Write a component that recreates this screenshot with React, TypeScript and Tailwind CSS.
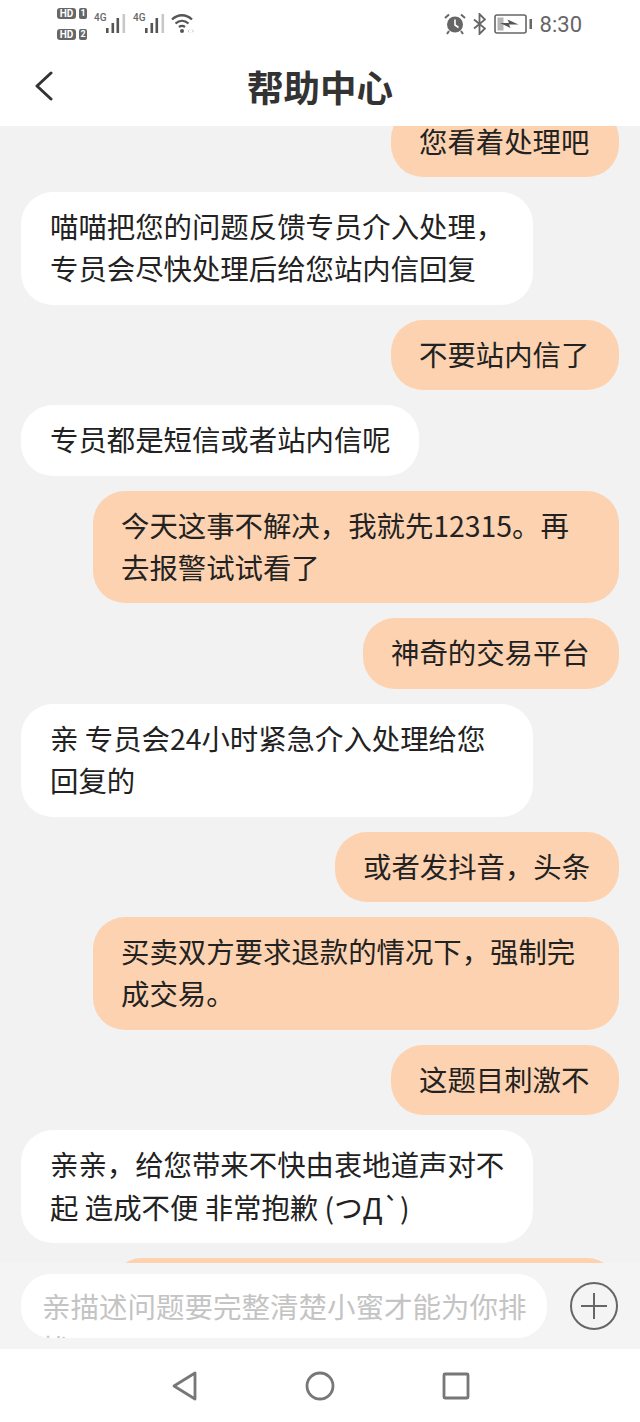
import React from 'react';

const messages: { id: number; mine: boolean; text: React.ReactNode; width: string }[] = [
  { id: 1, mine: true, width: 'w-[228px]', text: '您看着处理吧' },
  { id: 2, mine: false, width: 'w-[512px]', text: <>喵喵把您的问题反馈专员介入处理，<br />专员会尽快处理后给您站内信回复</> },
  { id: 3, mine: true, width: 'w-[228px]', text: '不要站内信了' },
  { id: 4, mine: false, width: 'w-[398px]', text: '专员都是短信或者站内信呢' },
  { id: 5, mine: true, width: 'w-[526px]', text: <>今天这事不解决，我就先12315。再<br />去报警试试看了</> },
  { id: 6, mine: true, width: 'w-[256px]', text: '神奇的交易平台' },
  { id: 7, mine: false, width: 'w-[512px]', text: <>亲 专员会24小时紧急介入处理给您<br />回复的</> },
  { id: 8, mine: true, width: 'w-[284px]', text: '或者发抖音，头条' },
  { id: 9, mine: true, width: 'w-[526px]', text: <>买卖双方要求退款的情况下，强制完<br />成交易。</> },
  { id: 10, mine: true, width: 'w-[228px]', text: '这题目刺激不' },
  { id: 11, mine: false, width: 'w-[512px]', text: <>亲亲，给您带来不快由衷地道声对不<br />起 造成不便 非常抱歉 (つД`)</> },
  // only the top edge of this one shows above the input bar
  { id: 12, mine: true, width: 'w-[509px]', text: <><br /><br /></> },
];

const Signal = () => (
  <div className="flex items-start w-[39px]">
    <span className="text-[10px] leading-[10px] font-medium text-[#666666] mt-[13px] w-[12px] scale-y-110">4G</span>
    <svg width="20" height="21" viewBox="0 0 20 21" className="mt-[13px]">
      <rect x="0" y="15" width="2.6" height="5" fill="#555555" />
      <rect x="5.5" y="10" width="2.6" height="10" fill="#555555" />
      <rect x="10.5" y="5" width="2.6" height="15" fill="#555555" />
      <rect x="16.5" y="1" width="2.6" height="19" fill="#c8c8c8" />
    </svg>
  </div>
);

const HdBadge = ({ n }: { n: number }) => (
  <div className="flex items-center gap-[3px]">
    <span className="w-[19px] h-[11px] rounded-[3px] bg-[#666666] text-white text-[10px] leading-[11px] font-bold text-center">HD</span>
    <span className="w-[8px] h-[11px] rounded-[2px] bg-[#666666] text-white text-[9px] leading-[11px] font-bold text-center">{n}</span>
  </div>
);

const StatusBar = () => (
  <div className="h-[50px] pl-[57px] pr-[58px] flex items-start justify-between font-['Roboto',sans-serif]">
    <div className="flex items-start">
      <div className="flex flex-col gap-[10px] pt-[8px] w-[37px]">
        <HdBadge n={1} />
        <HdBadge n={2} />
      </div>
      <Signal />
      <Signal />
      <svg width="24" height="22" viewBox="0 0 24 22" fill="none" stroke="#555555" strokeWidth="2.3" className="-ml-[1px] mt-[12px]">
        <path d="M1 7.5C7 1.8 15 1.8 21 7.5" />
        <path d="M4.5 11.5C8.5 8 13.5 8 17.5 11.5" />
        <path d="M8 15C9.8 13.6 12.2 13.6 14 15" />
        <circle cx="11" cy="19" r="2" fill="#555555" stroke="none" />
        <path d="M18.5 17.5l-1.5 1.5 1.5 1.5M21 17.5l1.5 1.5-1.5 1.5" stroke="#c8c8c8" strokeWidth="1" />
      </svg>
    </div>
    <div className="flex items-start pt-[13px]">
      <svg width="22" height="22" viewBox="0 0 22 22">
        <circle cx="11" cy="11.5" r="8" fill="#666666" />
        <path d="M11 6.5v5.5l3.5 2.5" stroke="#ffffff" strokeWidth="1.6" fill="none" />
        <path d="M1 5l4-3.5M21 5l-4-3.5M5 18l-2 3M17 18l2 3" stroke="#666666" strokeWidth="2" fill="none" />
      </svg>
      <svg width="13" height="22" viewBox="0 0 13 22" fill="none" stroke="#666666" strokeWidth="1.8" className="ml-[7px]">
        <path d="M1 6.5L12 15.5L6.5 21V1L12 6.5L1 15.5" />
      </svg>
      <svg width="38" height="21" viewBox="0 0 38 21" fill="none" className="ml-[8px]">
        <rect x="1" y="2" width="31" height="18" rx="2" stroke="#666666" strokeWidth="1.6" />
        <rect x="3.5" y="4.5" width="6" height="13" fill="#b5b5b5" />
        <path d="M6 10h9l-1.5-3.5 11 5h-9.5l1.5 3.5z" fill="#555555" />
        <rect x="35.5" y="6" width="2.5" height="10" fill="#666666" />
      </svg>
      <span className="ml-[8px] text-[22px] leading-[24px] text-[#666666]">8:30</span>
    </div>
  </div>
);

const Bubble = ({ mine, width, children }: { mine: boolean; width: string; children: React.ReactNode }) => (
  <div className={`${width} ${mine ? 'self-end bg-[#fdd2b0] pl-[28px]' : 'self-start bg-white pl-[29px]'} shrink-0 rounded-[32px] pt-[13px] pb-[15px] text-[28.4px] leading-[42.4px] text-[#222222] whitespace-nowrap`}>
    {children}
  </div>
);

export default function App() {
  return (
    <div className="w-[640px] h-[1422px] flex flex-col overflow-hidden bg-[#f2f2f2] font-['Noto_Sans_CJK_SC','Noto_Sans',sans-serif]">
      <div className="h-[126px] shrink-0 bg-white">
        <StatusBar />
        <div className="relative h-[76px] flex items-center justify-center">
          <svg width="18" height="30" viewBox="0 0 18 30" fill="none" stroke="#333333" strokeWidth="3" strokeLinecap="round" strokeLinejoin="round" className="absolute left-[35px] top-[21px]">
            <path d="M16 2L2 15L16 28" />
          </svg>
          <h1 className="text-[36.5px] leading-none font-bold text-[#333333] -mt-[2px]">帮助中心</h1>
        </div>
      </div>

      <div className="relative flex-1 overflow-hidden">
        {/* first bubble is scrolled under the title bar */}
        <div className="flex flex-col gap-[15px] pl-[21px] pr-[21px] -mt-[19.5px]">
          {messages.map((m) => (
            <Bubble key={m.id} mine={m.mine} width={m.width}>
              {m.text}
            </Bubble>
          ))}
        </div>

        <div className="absolute left-0 right-0 bottom-0 h-[86px] bg-[#f4f4f4] flex items-start pl-[21px] pr-[22px] pt-[11px]">
          <div className="w-[526px] h-[64px] rounded-[30px] bg-white overflow-hidden pl-[21px] pr-[16px] pt-[11px] text-[28.5px] leading-[42px] text-[#c4c4c4]">
            亲描述问题要完整清楚小蜜才能为你排忧
          </div>
          <div className="ml-auto mt-[8px] w-[48px] h-[48px] rounded-full border-2 border-[#666666] flex items-center justify-center">
            <svg width="26" height="26" viewBox="0 0 26 26" stroke="#666666" strokeWidth="2">
              <path d="M0 13H26M13 0V26" />
            </svg>
          </div>
        </div>
      </div>

      <div className="h-[73px] shrink-0 bg-white flex items-center justify-center gap-[92px]">
        <svg width="44" height="36" viewBox="0 0 44 36" fill="none" stroke="#777777" strokeWidth="2.8" strokeLinejoin="round">
          <path d="M33 5V31L12 18Z" />
        </svg>
        <svg width="44" height="36" viewBox="0 0 44 36" fill="none" stroke="#777777" strokeWidth="2.8">
          <circle cx="22" cy="18" r="13" />
        </svg>
        <svg width="44" height="36" viewBox="0 0 44 36" fill="none" stroke="#777777" strokeWidth="2.8">
          <rect x="10" y="6" width="24" height="24" rx="1" />
        </svg>
      </div>
    </div>
  );
}
